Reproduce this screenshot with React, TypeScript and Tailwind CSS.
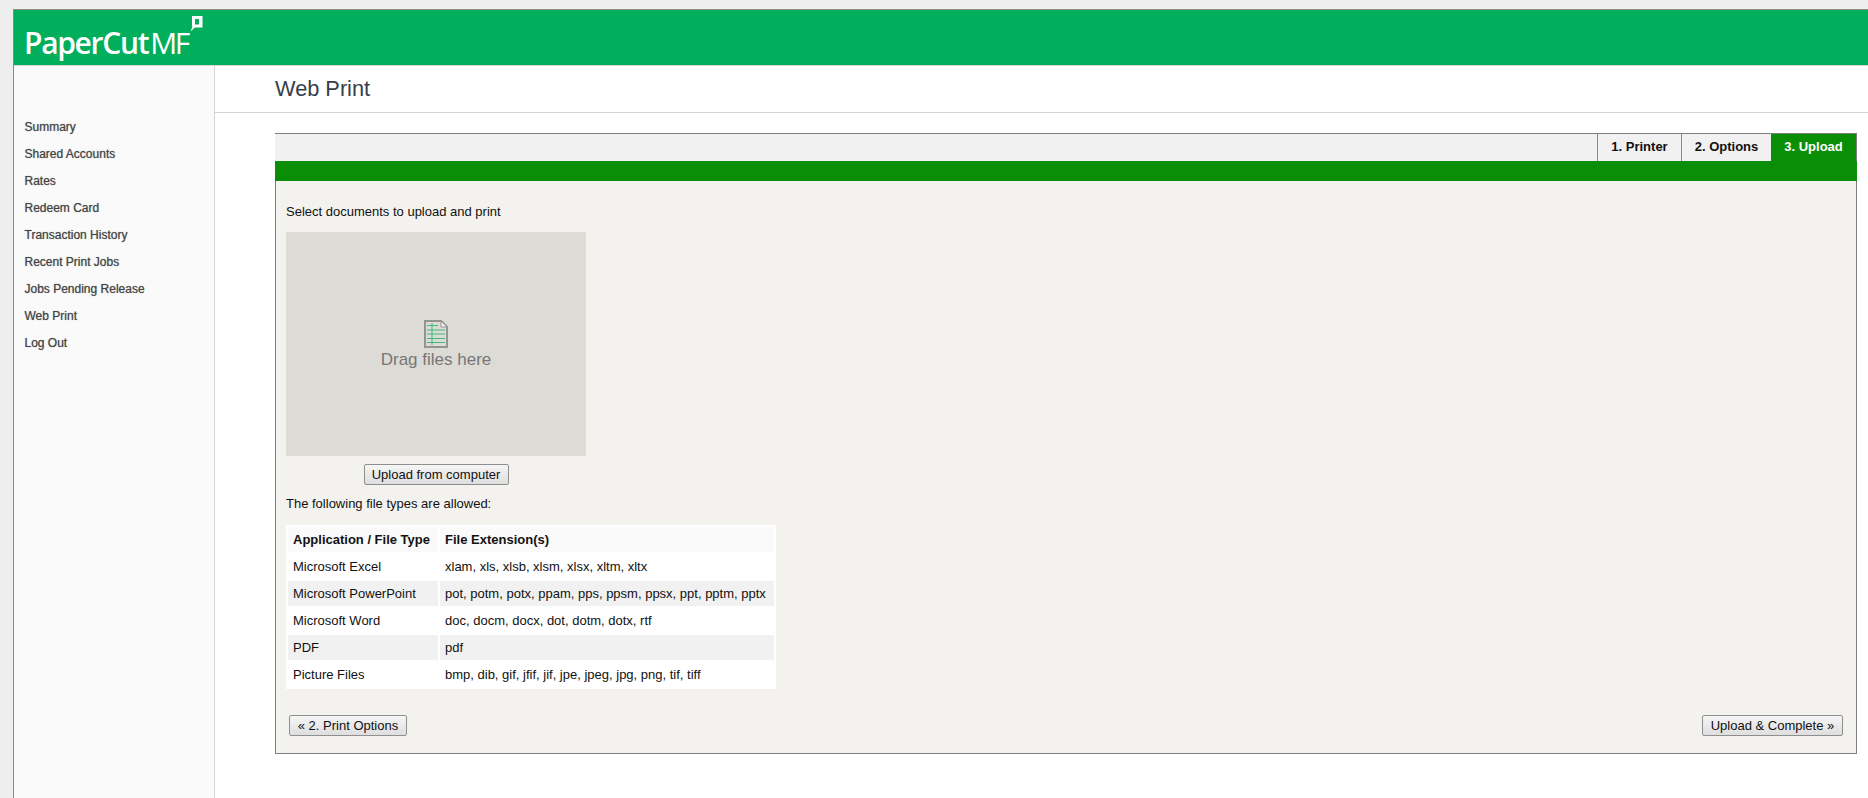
const navItems = ["Summary", "Shared Accounts", "Rates", "Redeem Card", "Transaction History", "Recent Print Jobs", "Jobs Pending Release", "Web Print", "Log Out"]

const fileTypes = [
    { app: "Microsoft Excel", ext: "xlam, xls, xlsb, xlsm, xlsx, xltm, xltx" },
    { app: "Microsoft PowerPoint", ext: "pot, potm, potx, ppam, pps, ppsm, ppsx, ppt, pptm, pptx" },
    { app: "Microsoft Word", ext: "doc, docm, docx, dot, dotm, dotx, rtf" },
    { app: "PDF", ext: "pdf" },
    { app: "Picture Files", ext: "bmp, dib, gif, jfif, jif, jpe, jpeg, jpg, png, tif, tiff" },
]

const buttonClass = "h-[21px] rounded-[2px] border border-[#8f8f8f] bg-gradient-to-b from-[#f6f6f6] to-[#dedede] text-[13px] leading-none text-[#111]"

function Logo() {
    return (
        <div className="relative h-full">
            <div className="pl-[10px] pt-[13px] text-[30px] leading-[40px] tracking-[-1.3px] font-semibold text-white font-['Open_Sans',sans-serif] whitespace-nowrap">
                PaperCut<span className="ml-[2px] font-normal tracking-[-2.5px]">MF</span>
            </div>
            <svg className="absolute left-[176px] top-[6px]" width="13" height="16" viewBox="0 0 13 16">
                <path d="M2 0H12.5V11.5H5L0.5 15.5L2.5 10.5H2Z" fill="#fff" />
                <rect x="5" y="3" width="4" height="5.5" fill="#00ae5b" />
            </svg>
        </div>
    )
}

function FileIcon() {
    return (
        <svg width="24" height="28" viewBox="0 0 24 28" fill="none">
            <path d="M1 1H17L23 7V27H1Z" fill="#dcdbd6" stroke="#949492" strokeWidth="2" />
            <path d="M17 1V7H23Z" fill="#f2f1ee" stroke="#949492" strokeWidth="1" />
            <path d="M3 5.5H14M3 10H21M3 14H21M3 18.5H21M3 22.5H21M8 3V25" stroke="#3fbb78" strokeWidth="1" />
        </svg>
    )
}

export default function App() {
    return (
        <div className="min-h-screen bg-[#eeeeee] pt-[9px] pl-[13px] font-['Liberation_Sans',Arial,sans-serif]">
            <div className="flex min-h-[789px] flex-col border-t border-l border-[#8a8a8a] bg-white">
                <div className="h-[55px] bg-[#00ae5b]">
                    <Logo />
                </div>
                <div className="flex flex-1 border-t border-[#d4d4d4]">
                    <nav className="w-[201px] shrink-0 border-r border-[#d4d4d4] bg-[#fafafa] pt-[48px] pl-[10.5px]">
                        {navItems.map((item) => (
                            <div key={item} className="h-[27px] text-[12px] leading-[27px] text-[#444] [text-shadow:0_0_1px_#888]">
                                {item}
                            </div>
                        ))}
                    </nav>
                    <main className="flex-1">
                        <div className="h-[47px] border-b border-[#d4d4d4] pl-[60px] text-[21.75px] leading-[46px] text-[#36404a]">
                            Web Print
                        </div>
                        <div className="pt-[20px] pl-[60px] pr-[11px]">
                            <div className="h-[621px] border border-[#7f7f7f] bg-[#f3f2ee]">
                                <div className="-ml-px flex h-[27px] justify-end border-l border-[#f1f1f1] bg-[#f1f1f1] text-[13px] leading-[26px] font-bold text-[#111]">
                                    <div className="w-[84px] border-l border-[#8a8a8a] text-center">1. Printer</div>
                                    <div className="w-[90px] border-l border-[#8a8a8a] text-center">2. Options</div>
                                    <div className="w-[85px] bg-[#0a8e08] text-center text-white">3. Upload</div>
                                </div>
                                <div className="-mx-px h-[20px] bg-[#0a8e08]" />
                                <div className="flex h-[572px] flex-col px-[10px] text-[13px] text-[#111]">
                                    <p className="mt-[24px] h-[14px] leading-[14px]">Select documents to upload and print</p>
                                    <div className="mt-[13px] flex h-[224px] w-[300px] flex-col items-center justify-center bg-[#dcdbd6] pt-[4px]">
                                        <FileIcon />
                                        <div className="text-[17px] leading-[24px] text-[#777]">Drag files here</div>
                                    </div>
                                    <div className="w-[300px] pt-[8px] text-center">
                                        <button className={`${buttonClass} w-[145px]`}>Upload from computer</button>
                                    </div>
                                    <p className="mt-[12px] h-[14px] leading-[14px]">The following file types are allowed:</p>
                                    <table className="mt-[14px] w-[490px] border-separate border-spacing-[2px] bg-white">
                                        <thead>
                                            <tr className="h-[25px] bg-[#fafafa] font-bold">
                                                <th className="w-[150px] pl-[5px] text-left">Application / File Type</th>
                                                <th className="pl-[5px] text-left">File Extension(s)</th>
                                            </tr>
                                        </thead>
                                        <tbody>
                                            {fileTypes.map((row, i) => (
                                                <tr key={row.app} className={`h-[25px] ${i % 2 === 1 ? "bg-[#f1f1f1]" : "bg-white"}`}>
                                                    <td className="pl-[5px]">{row.app}</td>
                                                    <td className="pl-[5px]">{row.ext}</td>
                                                </tr>
                                            ))}
                                        </tbody>
                                    </table>
                                    <div className="mt-[26px] flex justify-between pl-[3px] pr-[3px]">
                                        <button className={`${buttonClass} w-[118px]`}>« 2. Print Options</button>
                                        <button className={`${buttonClass} w-[141px]`}>Upload &amp; Complete »</button>
                                    </div>
                                </div>
                            </div>
                        </div>
                    </main>
                </div>
            </div>
        </div>
    )
}
